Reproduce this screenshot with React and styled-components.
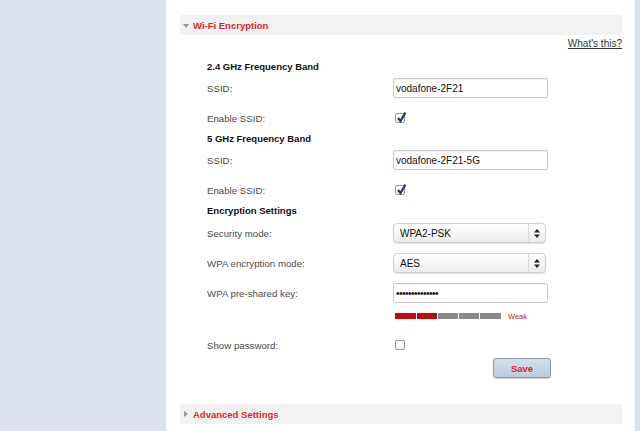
import React from "react";
import styled, { createGlobalStyle } from "styled-components";

const Global = createGlobalStyle`
  html, body { margin: 0; padding: 0; }
  body {
    background: #dde3ec;
    font-family: "Liberation Sans", Arial, Helvetica, sans-serif;
    font-size: 10px;
    color: #444;
  }
`;

const Page = styled.div`
  display: flex;
  height: 431px;
  overflow: hidden;
`;

const Sidebar = styled.div`
  width: 166px;
  flex-shrink: 0;
  background: #dde3ec;
`;

const Main = styled.div`
  flex: 1;
  background: #fff;
  padding: 15px 12px 0 14px;
  border-right: 1px solid #eceff3;
`;

const Strip = styled.div`
  width: 5px;
  background: #dde3ec;
`;

const SectionBar = styled.div`
  height: 20px;
  background: #f2f2f2;
  border-radius: 2px;
  display: flex;
  align-items: center;
  gap: 4px;
  padding-left: 3px;
  margin-top: ${(p) => p.$mt || 0}px;
`;

const Triangle = styled.span`
  width: 0;
  height: 0;
  ${(p) =>
    p.$open
      ? `border-left: 3px solid transparent;
         border-right: 3px solid transparent;
         border-top: 4px solid #9a9a9a;
         margin-top: 2px;`
      : `border-top: 3px solid transparent;
         border-bottom: 3px solid transparent;
         border-left: 4px solid #9a9a9a;
         margin-left: 1px;
         margin-right: 1px;`}
`;

const SectionTitle = styled.span`
  color: #e3202f;
  font-weight: bold;
  font-size: 9.5px;
`;

const HelpRow = styled.div`
  height: 16px;
  display: flex;
  align-items: center;
  justify-content: flex-end;
`;

const HelpLink = styled.a`
  color: #333;
  text-decoration: underline;
  font-size: 10px;
`;

const Form = styled.div`
  padding-left: 27px;
`;

const Row = styled.div`
  display: flex;
  align-items: center;
  height: ${(p) => p.$h || 16}px;
  margin-top: ${(p) => p.$mt || 0}px;
`;

const Heading = styled.div`
  font-weight: bold;
  color: #111;
  font-size: 9.5px;
`;

const Label = styled.div`
  width: 186px;
  flex-shrink: 0;
  color: #4a4a4a;
  font-size: 9.7px;
`;

const TextInput = styled.div`
  box-sizing: border-box;
  width: ${(p) => p.$w || 155}px;
  height: 20px;
  border: 1px solid #c9c9c9;
  border-radius: 2px;
  box-shadow: inset 0 1px 1px rgba(0, 0, 0, 0.06);
  display: flex;
  align-items: center;
  padding-left: 2px;
  color: #111;
  font-size: 10px;
  letter-spacing: ${(p) => (p.$secret ? "-0.5px" : "0")};
`;

const Select = styled.div`
  box-sizing: border-box;
  width: 153px;
  height: 20px;
  border: 1px solid #cfcfcf;
  border-radius: 4px;
  background: linear-gradient(#ffffff, #ececec);
  box-shadow: 0 1px 1px rgba(0, 0, 0, 0.12);
  display: flex;
  align-items: center;
  color: #111;
  font-size: 10px;
`;

const SelectText = styled.span`
  flex: 1;
  padding-left: 6px;
`;

const SelectArrows = styled.span`
  width: 16px;
  height: 100%;
  border-left: 1px solid #d8d8d8;
  display: flex;
  align-items: center;
  justify-content: center;
`;

const Box = styled.span`
  box-sizing: border-box;
  width: 10px;
  height: 10px;
  margin-left: 2px;
  border: 1px solid #9a9a9a;
  border-radius: 2px;
  background: linear-gradient(#fff, #f0f0f0);
  position: relative;
`;

const Tick = styled.svg`
  position: absolute;
  left: 0;
  top: -3px;
`;

const Meter = styled.div`
  display: flex;
  gap: 1px;
  margin-left: 2px;
`;

const Segment = styled.span`
  width: ${(p) => p.$w}px;
  height: 6px;
  background: ${(p) => (p.$on ? "#c40a0a" : "#8a8a8a")};
`;

const MeterText = styled.span`
  color: #c8202a;
  font-size: 7.5px;
  margin-left: 7px;
`;

const SaveRow = styled.div`
  display: flex;
  justify-content: flex-end;
  padding-right: 71px;
  margin-top: 5px;
`;

const Button = styled.button`
  width: 58px;
  height: 20px;
  border: 1px solid #8d98a3;
  border-radius: 3px;
  background: linear-gradient(#d3dfea, #bccddb);
  box-shadow: 0 1px 1px rgba(0, 0, 0, 0.2);
  color: #e3202f;
  font-family: "Liberation Sans", Arial, sans-serif;
  font-weight: bold;
  font-size: 9.5px;
  padding: 0;
`;

const Checkbox = ({ checked }) => (
  <Box>
    {checked && (
      <Tick width="11" height="12" viewBox="0 0 11 12">
        <path d="M2 7 L4.5 10 L9.5 1.5" fill="none" stroke="#23396b" strokeWidth="2.2" />
      </Tick>
    )}
  </Box>
);

const Dropdown = ({ value }) => (
  <Select>
    <SelectText>{value}</SelectText>
    <SelectArrows>
      <svg width="6" height="9" viewBox="0 0 6 9">
        <path d="M0 3.5 L3 0 L6 3.5 Z M0 5.5 L3 9 L6 5.5 Z" fill="#222" />
      </svg>
    </SelectArrows>
  </Select>
);

const segments = [
  { w: 21, on: true },
  { w: 20, on: true },
  { w: 20, on: false },
  { w: 20, on: false },
  { w: 21, on: false },
];

export default function App() {
  return (
    <Page>
      <Global />
      <Sidebar />
      <Main>
        <SectionBar>
          <Triangle $open />
          <SectionTitle>Wi-Fi Encryption</SectionTitle>
        </SectionBar>
        <HelpRow>
          <HelpLink>What's this?</HelpLink>
        </HelpRow>
        <Form>
          <Row $mt={7}>
            <Heading>2.4 GHz Frequency Band</Heading>
          </Row>
          <Row $mt={4} $h={20}>
            <Label>SSID:</Label>
            <TextInput>vodafone-2F21</TextInput>
          </Row>
          <Row $mt={12}>
            <Label>Enable SSID:</Label>
            <Checkbox checked />
          </Row>
          <Row $mt={4}>
            <Heading>5 GHz Frequency Band</Heading>
          </Row>
          <Row $mt={4} $h={20}>
            <Label>SSID:</Label>
            <TextInput>vodafone-2F21-5G</TextInput>
          </Row>
          <Row $mt={12}>
            <Label>Enable SSID:</Label>
            <Checkbox checked />
          </Row>
          <Row $mt={4}>
            <Heading>Encryption Settings</Heading>
          </Row>
          <Row $mt={5} $h={20}>
            <Label>Security mode:</Label>
            <Dropdown value="WPA2-PSK" />
          </Row>
          <Row $mt={10} $h={20}>
            <Label>WPA encryption mode:</Label>
            <Dropdown value="AES" />
          </Row>
          <Row $mt={10} $h={20}>
            <Label>WPA pre-shared key:</Label>
            <TextInput $secret>••••••••••••••</TextInput>
          </Row>
          <Row $mt={10} $h={6}>
            <Label />
            <Meter>
              {segments.map((s, i) => (
                <Segment key={i} $w={s.w} $on={s.on} />
              ))}
            </Meter>
            <MeterText>Weak</MeterText>
          </Row>
          <Row $mt={18}>
            <Label>Show password:</Label>
            <Checkbox />
          </Row>
          <SaveRow>
            <Button>Save</Button>
          </SaveRow>
        </Form>
        <SectionBar $mt={26}>
          <Triangle />
          <SectionTitle>Advanced Settings</SectionTitle>
        </SectionBar>
      </Main>
      <Strip />
    </Page>
  );
}
